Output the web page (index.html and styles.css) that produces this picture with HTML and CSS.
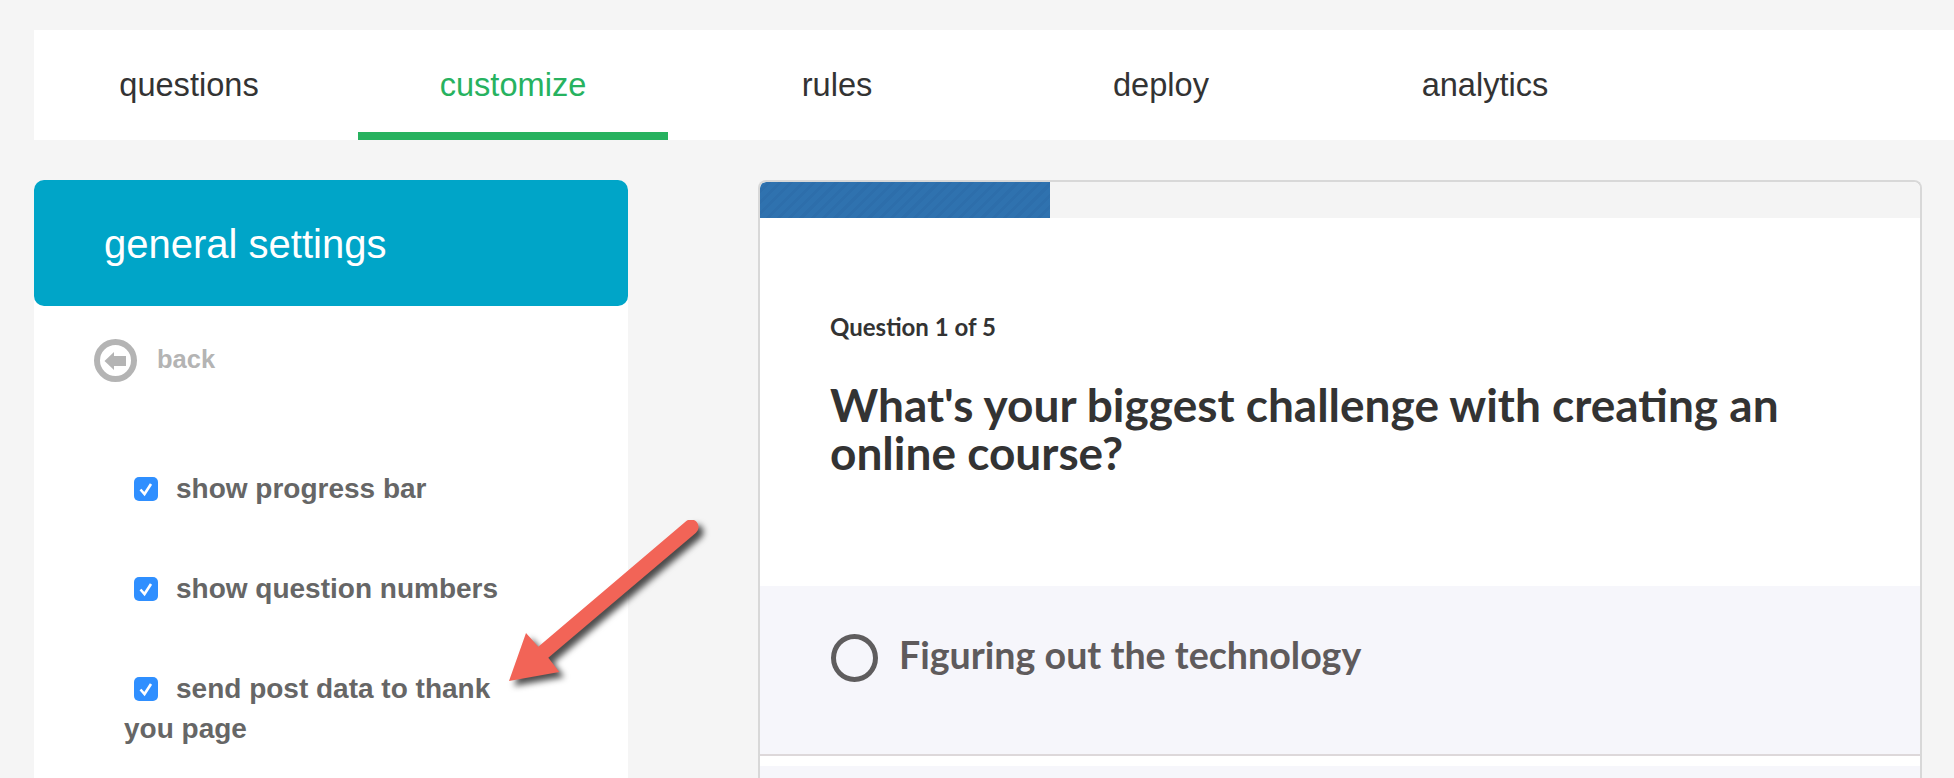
FILE: index.html
```html
<!DOCTYPE html>
<html>
	<head>
		<meta charset="utf-8" />
		<title>Quiz customize</title>
		<link rel="stylesheet" href="styles.css">
	</head>
	<body>
		<nav class="tabs">
			<a class="tab">questions</a>
			<a class="tab active">customize</a>
			<a class="tab">rules</a>
			<a class="tab">deploy</a>
			<a class="tab">analytics</a>
		</nav>

		<div class="main">
			<aside class="sidebar">
				<h2 class="sidebar-title">general settings</h2>
				<div class="back">
					<svg class="back-icon" viewBox="0 0 43 43">
						<circle cx="21.5" cy="21.5" r="18.5" fill="none" stroke="#b4b4b4" stroke-width="6" />
						<path d="M10.5 22 L20 13 V17 H32 V27 H20 V31 Z" fill="#b4b4b4" />
					</svg>
					<span class="back-label">back</span>
				</div>
				<div class="settings">
					<div class="setting"><span class="check"><svg viewBox="0 0 24 24"><path d="M6.5 12.5 L10.5 17 L17 7" fill="none" stroke="#fff" stroke-width="2.6" /></svg></span>show progress bar</div>
					<div class="setting"><span class="check"><svg viewBox="0 0 24 24"><path d="M6.5 12.5 L10.5 17 L17 7" fill="none" stroke="#fff" stroke-width="2.6" /></svg></span>show question numbers</div>
					<div class="setting"><span class="check"><svg viewBox="0 0 24 24"><path d="M6.5 12.5 L10.5 17 L17 7" fill="none" stroke="#fff" stroke-width="2.6" /></svg></span>send post data to thank you page</div>
				</div>
			</aside>

			<section class="card">
				<div class="progress"><div class="progress-fill"></div></div>
				<div class="question">
					<div class="question-count">Question 1 of 5</div>
					<h1 class="question-title">What's your biggest challenge with creating an online course?</h1>
				</div>
				<div class="answer">
					<span class="radio"></span>
					<span class="answer-text">Figuring out the technology</span>
				</div>
				<div class="answer"></div>
			</section>
		</div>

		<!-- annotation arrow -->
		<svg class="arrow" viewBox="0 0 240 200">
			<path d="M9 161 L26 113 L38.3 126.7 L186 1.3 A7.5 7.5 0 0 1 196 12.7 L48.3 137.7 L59.3 152 Z" fill="#f26457" />
		</svg>
	</body>
</html>
```

FILE: styles.css
```css
html,
body {
	height: 100%;
}

body {
	margin: 0;
	padding: 30px 0 0 34px;
	box-sizing: border-box;
	overflow: hidden;
	background-color: #f5f5f5;
	font-family: 'Liberation Sans', Arial, sans-serif;
}

/* Tabs */
.tabs {
	display: flex;
	gap: 14px;
	height: 110px;
	background: white;
}

.tab {
	box-sizing: border-box;
	width: 310px;
	height: 110px;
	padding-top: 34px;
	font-size: 32.6px;
	line-height: 42px;
	color: #333;
	text-align: center;
}

.tab.active {
	color: #27b25f;
	border-bottom: 8px solid #27b25f;
}

/* Sidebar */
.main {
	display: flex;
	align-items: flex-start;
	height: 598px;
	margin-top: 40px;
	overflow: hidden;
}

.sidebar {
	width: 594px;
	height: 598px;
	background: white;
	border-radius: 10px 10px 0 0;
}

.sidebar-title {
	margin: 0;
	height: 126px;
	padding-left: 70px;
	font-size: 40px;
	font-weight: normal;
	line-height: 128px;
	color: white;
	background: #00a5c8;
	border-radius: 10px;
}

.back {
	display: flex;
	align-items: center;
	gap: 20px;
	margin: 33px 0 0 60px;
	font-size: 25.5px;
	font-weight: bold;
	line-height: 41px;
	color: #b4b4b4;
}

.back-icon {
	width: 43px;
	height: 43px;
}

.back-label {
	margin-top: -2px;
}

.settings {
	margin-top: 87px;
	padding: 0 108px 0 90px;
}

.setting {
	margin-bottom: 60px;
	font-size: 28px;
	font-weight: bold;
	line-height: 40px;
	color: #666;
}

.check {
	display: inline-block;
	width: 24px;
	height: 24px;
	margin: 0 18px 0 10px;
	vertical-align: -3px;
	background: #2f8fff;
	border-radius: 5px;
}

.check svg {
	display: block;
}

/* Question card */
.card {
	box-sizing: border-box;
	width: 1164px;
	height: 598px;
	margin-left: 130px;
	overflow: hidden;
	background: white;
	border: 2px solid #d8d8d8;
	border-bottom: none;
	border-radius: 8px 8px 0 0;
}

.progress {
	height: 36px;
	background: #f4f4f4;
	border-radius: 6px 6px 0 0;
	overflow: hidden;
}

.progress-fill {
	width: 290px;
	height: 100%;
	background: repeating-linear-gradient(135deg, #2f72af 0, #2f72af 5px, #2d6eab 5px, #2d6eab 8px);
}

.question {
	height: 368px;
	padding: 0 70px;
	box-sizing: border-box;
	color: #333;
	font-family: Lato, sans-serif;
	font-weight: bold;
}

.question-count {
	padding-top: 94px;
	font-size: 24px;
	line-height: 30px;
}

.question-title {
	margin: 39px 0 0;
	font-size: 46px;
	font-weight: bold;
	line-height: 48px;
}

.answer {
	display: flex;
	align-items: center;
	gap: 21px;
	box-sizing: border-box;
	height: 170px;
	margin-bottom: 10px;
	padding: 0 0 24px 71px;
	background: #f6f6fb;
	border-bottom: 2px solid #ddd8da;
}

.radio {
	box-sizing: border-box;
	width: 47px;
	height: 48px;
	border: 5px solid #5f5d5e;
	border-radius: 50%;
}

.answer-text {
	margin-top: -8px;
	font-family: Lato, sans-serif;
	font-size: 37.6px;
	font-weight: bold;
	color: #5f5b5c;
}

/* Arrow drawn over the page */
.arrow {
	position: absolute;
	left: 500px;
	top: 520px;
	width: 240px;
	height: 200px;
	filter: drop-shadow(5px 5px 3px rgba(0, 0, 0, 0.7));
}
```
